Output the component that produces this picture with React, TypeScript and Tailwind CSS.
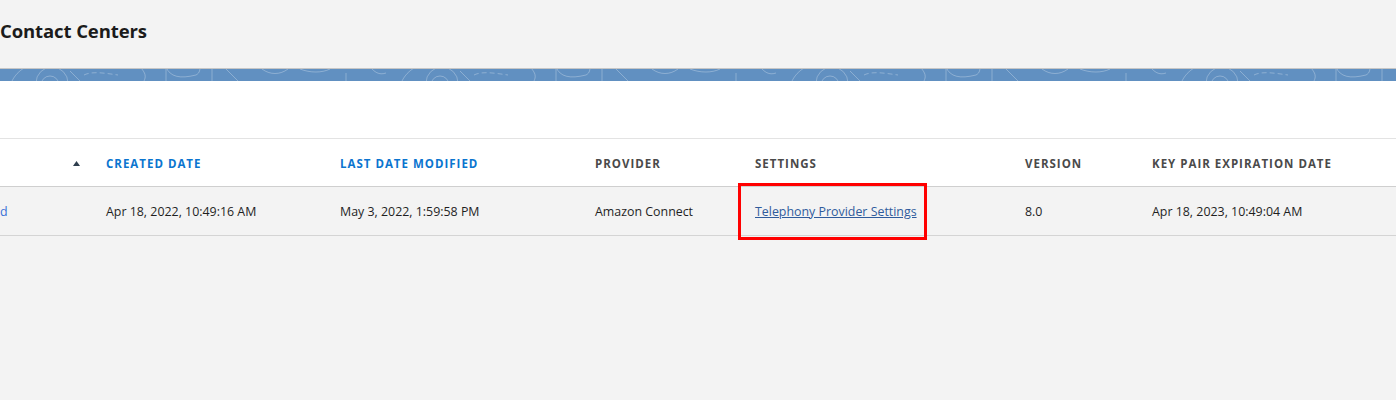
import React from "react";

function BandPattern() {
  const tiles = [0, 390, 780, 1170];
  return (
    <svg className="absolute inset-0 h-full w-full" viewBox="0 0 1396 12" preserveAspectRatio="none" fill="none" stroke="rgba(255,255,255,0.28)" strokeWidth="1">
      {tiles.map((o) => (
        <g key={o} transform={`translate(${o} 0)`}>
          <path d="M12 12 C16 4 22 0 26 -2" />
          <circle cx="52" cy="14" r="16" />
          <circle cx="50" cy="16" r="9" />
          <path d="M70 2 C74 6 78 10 80 12" />
          <path d="M84 6 C92 2 104 4 118 6" strokeDasharray="5 3" />
          <path d="M140 -2 C146 4 146 8 144 12" />
          <path d="M166 -2 L166 12" />
          <path d="M166 -2 C170 8 180 10 196 6 C200 4 200 0 200 -2" />
          <path d="M212 0 L212 12" />
          <path d="M226 0 L238 12" />
          <path d="M262 0 C270 6 280 6 288 0" />
          <path d="M300 0 C310 4 322 4 330 0" />
          <path d="M346 4 L346 12" />
          <path d="M372 0 C376 4 380 6 386 4" />
        </g>
      ))}
    </svg>
  );
}

export default function App() {
  const font = { fontFamily: '"Open Sans", "Noto Sans", sans-serif' };
  return (
    <div className="min-h-[400px] w-[1396px] bg-[#f3f3f3]" style={font}>
      <div className="h-[68px] bg-[#f3f3f3] pt-[18px]">
        <h1 className="text-[18.5px] font-bold leading-[26px] text-[#1b1b1b] tracking-[-0.1px]">Contact Centers</h1>
      </div>
      <div className="relative h-[13px] border-t border-[#c6c6c6] bg-[#6190c1] overflow-hidden">
        <BandPattern />
      </div>
      <div className="h-[58px] bg-white border-b border-[#e3e3e3]" />
      <div className="grid grid-cols-[106px_234px_255px_160px_270px_127px_1fr] h-[48px] pt-[2px] bg-white border-b border-[#cfcfcf] items-center text-[11.5px] font-bold tracking-[1px] uppercase">
        <div className="relative h-full">
          <svg className="absolute left-[73px] top-[20px]" width="7" height="5" viewBox="0 0 7 5">
            <path d="M3.5 0 L7 5 L0 5 Z" fill="#2f3e4e" />
          </svg>
        </div>
        <div className="text-[#0b75cf]">Created Date</div>
        <div className="text-[#0b75cf]">Last Date Modified</div>
        <div className="text-[#4a4a4a]">Provider</div>
        <div className="text-[#4a4a4a]">Settings</div>
        <div className="text-[#4a4a4a]">Version</div>
        <div className="text-[#4a4a4a]">Key Pair Expiration Date</div>
      </div>
      <div className="grid grid-cols-[106px_234px_255px_160px_270px_127px_1fr] h-[49px] pt-[2px] bg-[#f3f3f3] border-b border-[#d4d4d4] items-center text-[12.4px] text-[#1f1f1f]">
        <div className="text-[#3a6fd6]">d</div>
        <div>Apr 18, 2022, 10:49:16 AM</div>
        <div>May 3, 2022, 1:59:58 PM</div>
        <div>Amazon Connect</div>
        <div className="relative h-full flex items-center">
          <div className="absolute left-[-17px] top-[-6px] w-[189px] h-[57px] border-[3px] border-[#ff0000]" />
          <a className="text-[#2f5b9c] underline">Telephony Provider Settings</a>
        </div>
        <div>8.0</div>
        <div>Apr 18, 2023, 10:49:04 AM</div>
      </div>
    </div>
  );
}
